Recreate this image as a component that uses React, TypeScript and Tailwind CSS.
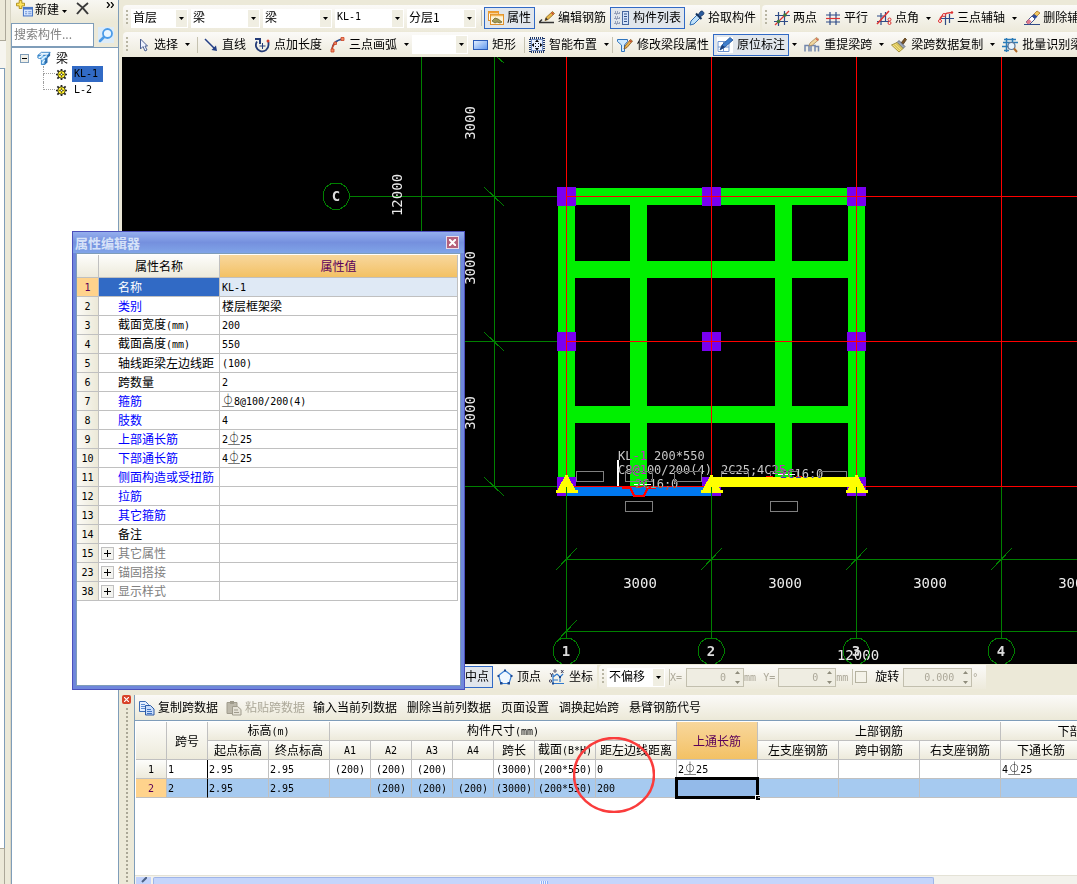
import type { ReactNode } from 'react';
import clsx from 'clsx';

const CJK = "font-['Noto_Sans_CJK_SC',sans-serif]";
const MONO = "font-['DejaVu_Sans_Mono','Noto_Sans_CJK_JP',monospace]";

// Latin runs are set in a half-width face, CJK runs in the full-width one
function Mixed({ text }: { text: string }) {
  const parts = text.split(/([\x20-\x7e]+)/).filter(Boolean);
  return (
    <>
      {parts.map((part, i) =>
        /^[\x20-\x7e]+$/.test(part) ? (
          <span key={i} className={clsx(MONO, 'text-[10px] whitespace-pre')}>
            {part}
          </span>
        ) : (
          <span key={i}>{part}</span>
        ),
      )}
    </>
  );
}

/* ---------- icons ---------- */

function Icon({ children, size = 'h-4 w-4' }: { children: ReactNode; size?: string }) {
  return (
    <svg viewBox="0 0 16 16" className={clsx('shrink-0', size)} fill="none" aria-hidden="true">
      {children}
    </svg>
  );
}

const NewIcon = () => (
  <Icon size="h-[17px] w-[17px]">
    <path d="M3 .5h2.500v2.500H8v2.500H5.500V8H3V5.500H.5V3H3z" fill="#ffe45c" stroke="#a8860b" strokeWidth=".8" />
    <rect x="7" y="7" width="8.500" height="8" fill="#dbe9ff" stroke="#4b78c8" />
    <path d="M7 8h8.500" stroke="#4b78c8" strokeWidth="2" />
    <path d="M8.500 11h2M11.500 11h3M8.500 13h2M11.500 13h3" stroke="#6c93d8" />
  </Icon>
);
const PropertyIcon = () => (
  <Icon>
    <rect x=".5" y="1.500" width="10" height="9" fill="#fff" stroke="#e0912c" />
    <path d="M0 2.500h11" stroke="#f0a030" strokeWidth="2" />
    <rect x="2.500" y="4.500" width="13" height="10" fill="#fdf3d8" stroke="#e0912c" />
    <path d="M3 5.500h12" stroke="#f5b95a" strokeWidth="1.500" />
    <path d="M4 11l3-3 3 1 4 3-2 1-3-1-2 1z" fill="#a09a58" stroke="#6b662c" strokeWidth=".8" />
  </Icon>
);
const EditRebarIcon = () => (
  <Icon>
    <path d="M0 12.500h15M0 12.500l3-3" stroke="#333" strokeWidth="1.500" />
    <path d="M6 10.500l1-3L13.500 1.500l2 2L9 9.500z" fill="#e8b94c" stroke="#8a6318" strokeWidth=".8" />
    <path d="M12.500 2.500l2 2" stroke="#c64634" strokeWidth="1.500" />
    <path d="M6 10.500l1-3 2 2z" fill="#333" />
  </Icon>
);
const ListIcon = () => (
  <Icon>
    <path d="M1 2h3v2H1zM1 7h3v2H1zM1 12h3v2H1z" stroke="#4a5c88" strokeDasharray="1 1" />
    <path d="M5 3h2M5 8h2M5 13h2" stroke="#4a5c88" strokeDasharray="1 1" />
    <rect x="8.500" y="1.500" width="6" height="13" fill="#d4e3fb" stroke="#47679f" />
    <path d="M10 4h3M10 6.500h3M10 9h3M10 11.500h3" stroke="#2f4e87" />
  </Icon>
);
const PickIcon = () => (
  <Icon>
    <path d="M1 15l1-4 6-6 3 3-6 6z" fill="#bfe1fa" stroke="#2f6db4" />
    <path d="M7 3.500l5.500 5.500" stroke="#16345f" strokeWidth="2" />
    <path d="M9 5l2.500-3.500c1.500-1.500 4.500 1 3 3L11 7z" fill="#2b5c9e" stroke="#16345f" strokeWidth=".8" />
  </Icon>
);
const TwoPointIcon = () => (
  <Icon>
    <path d="M4.500 2v14M10.500 1v14M1 5.500h15M0 11.500h14" stroke="#2f4b87" strokeWidth="1.200" />
    <path d="M1 15L15 1" stroke="#d33" strokeWidth="1.200" />
    <circle cx="4.500" cy="11.500" r="1.800" fill="#3c7a3c" />
    <circle cx="11" cy="5" r="1.800" fill="#3c7a3c" />
  </Icon>
);
const ParallelIcon = () => (
  <Icon>
    <path d="M5 2v13M11 2v13" stroke="#2f4b87" strokeWidth="1.200" />
    <path d="M1 5h14M1 12h14" stroke="#2f4b87" strokeWidth="1.200" />
    <path d="M1 8.500h14" stroke="#d33" strokeWidth="1.200" />
  </Icon>
);
const AngleIcon = () => (
  <Icon>
    <path d="M5 3v12M1 6h9M1 11.500h12M9.500 2v9" stroke="#2f4b87" strokeWidth="1.200" />
    <path d="M1 14L13 1" stroke="#d33" strokeWidth="1.500" />
    <circle cx="13.500" cy="9.500" r="1.500" stroke="#d33" />
    <circle cx="13.500" cy="13" r="1.500" stroke="#d33" />
  </Icon>
);
const ThreePointAxisIcon = () => (
  <Icon>
    <path d="M7.500 4v11M11.500 4v9M3 8.500h13" stroke="#2f4b87" strokeWidth="1.200" />
    <path d="M1.500 11.500C2 6 7 2.500 14 2.500" stroke="#d33" strokeWidth="1.500" />
    <circle cx="2" cy="11" r="1.500" fill="#fff" stroke="#d33" />
    <circle cx="6" cy="5" r="1.500" fill="#fff" stroke="#d33" />
    <circle cx="14" cy="2.500" r="1.200" fill="#d33" />
  </Icon>
);
const EraseIcon = () => (
  <Icon>
    <path d="M0 14.500h16" stroke="#2f4b87" />
    <path d="M8 6l5-5 3 2-6 6z" fill="#f3c860" stroke="#a8772a" strokeWidth=".8" />
    <path d="M7 7l3-3 3.500 2.500L10 10z" fill="#2f4b9a" />
    <path d="M4 10l4-4 3 3-5 5H4l-2-2z" fill="#fff" stroke="#44598f" />
    <path d="M2 12l3-3 2.500 2.500L5 14H3.500z" fill="#e1798b" />
  </Icon>
);
const CursorIcon = () => (
  <Icon>
    <path d="M5.500 2v10l2.500-2.500L10 14l2-1-2-4h2.500z" fill="#eef3ff" stroke="#4a5f92" />
  </Icon>
);
const LineIcon = () => (
  <Icon>
    <path d="M3 2l10 10" stroke="#233f86" strokeWidth="1.500" />
    <path d="M15 14L9.500 13 14 8.500z" fill="#233f86" />
  </Icon>
);
const PointLengthIcon = () => (
  <Icon>
    <path d="M3 4.500A6.300 6.300 0 1 0 14.500 8V5" stroke="#243c78" strokeWidth="1.800" />
    <path d="M1 2h5v5" stroke="#243c78" strokeWidth="2" />
    <path d="M8.500 6v6M5.500 9h6" stroke="#243c78" />
    <circle cx="14" cy="4" r="1.500" fill="#cf3a2a" />
  </Icon>
);
const ArcIcon = () => (
  <Icon>
    <path d="M2 14C2 7 6 3 13 2" stroke="#2a4c8e" strokeWidth="1.500" />
    <path d="M2 14C2 10 3 8 5 6" stroke="#cc4423" strokeWidth="1.500" />
    <path d="M1 12h3v3H1zM4 5h2.500v2.500H4zM11 .5h3v3h-3z" fill="#f08a68" stroke="#cc4423" strokeWidth=".8" />
  </Icon>
);
const RectIcon = () => (
  <Icon>
    <defs>
      <linearGradient id="rectFill" x1="0" y1="0" x2="1" y2="1">
        <stop offset="0" stopColor="#e8f2ff" />
        <stop offset="1" stopColor="#5d96ee" />
      </linearGradient>
    </defs>
    <rect x="1.500" y="3.500" width="14" height="9" fill="url(#rectFill)" stroke="#2c5cb8" />
  </Icon>
);
const SmartIcon = () => (
  <Icon>
    <rect x="1" y="1" width="14" height="14" stroke="#1c3568" strokeWidth="2" strokeDasharray="1 1" />
    <rect x="2.500" y="2.500" width="11" height="11" fill="#eaf1ff" stroke="#7590c4" />
    <path d="M8 2.500l2 2.500H6zM8 13.500l2-2.500H6zM2.500 8L5 6v4zM13.500 8L11 6v4z" fill="#000" />
    <path d="M6 6h1v1H6zM9 6h1v1H9zM6 9h1v1H6zM9 9h1v1H9z" fill="#000" />
  </Icon>
);
const EditBeamIcon = () => (
  <Icon>
    <path d="M.5 2.500h10v2L7.500 8v6.500h-3V8l-4-3.500z" fill="#cfeaff" stroke="#3075bd" />
    <path d="M7 12l1-3 5.500-6.500 2 1.500L10 10.500z" fill="#e9b550" stroke="#7d4c18" strokeWidth=".8" />
    <path d="M12.500 3.500l2 1.500" stroke="#c64634" strokeWidth="1.500" />
  </Icon>
);
const AnnotateIcon = () => (
  <Icon>
    <rect width="16" height="16" fill="#fff" />
    <path d="M1 4.500h11v10H1zM1 10h11M6.500 5v10" stroke="#6f95cf" />
    <path d="M3 13l2-5L13 .5 16 3 8 10z" fill="#3f7fce" stroke="#1f4f94" strokeWidth=".8" />
    <path d="M3 13l2-5 3 2z" fill="#1c3f78" />
  </Icon>
);
const RespanIcon = () => (
  <Icon>
    <path d="M1 14.500v-6h4v6M7 14.500v-6h4v6M11.500 9.500h3v5" stroke="#7286ac" strokeWidth="1.500" />
    <path d="M5 9l1-3L12.500.5l2.500 2L8.500 8z" fill="#f0d7a0" stroke="#a8895a" strokeWidth=".8" />
    <path d="M12 1.500l2 2" stroke="#db6650" strokeWidth="1.500" />
  </Icon>
);
const BrushIcon = () => (
  <Icon>
    <path d="M10 6l4-5 1.500 1.500L12 7.500z" fill="#7c5527" stroke="#4b3413" strokeWidth=".8" />
    <path d="M8 3.500l6 6-2 2-6-6z" fill="#9aa3b5" stroke="#4d566b" strokeWidth=".8" />
    <path d="M6 5.500l6 6-4 3.500-7.500-7z" fill="#f4e07a" stroke="#8f7d22" strokeWidth=".8" />
    <path d="M3 7.500l6 6M5 6.500l6 6" stroke="#b29c34" strokeWidth=".8" />
  </Icon>
);
const IdentifyIcon = () => (
  <Icon>
    <path d="M2 2.500h12M1 5.500h15M0 9.500h6M2 13.500h5M4.500 1v14M10.500 1v4" stroke="#2b7bb8" strokeWidth="1.500" />
    <circle cx="9.500" cy="9" r="3.500" fill="#e8f5ff" stroke="#5c7698" strokeWidth="1.200" />
    <path d="M12 11.500l3 3.500" stroke="#b06a26" strokeWidth="2" />
  </Icon>
);
const BeamFolderIcon = () => (
  <Icon size="h-[14px] w-[14px]">
    <path d="M1 5l4-3.500h10L12 5z" fill="#eaf6ff" stroke="#2a7cc4" />
    <path d="M1 5h11v3L9 9v6.500H5V9L1 8z" fill="#8ac6f2" stroke="#2a7cc4" />
    <path d="M12 5l3-3.500v4L12 8z" fill="#2b6fb0" />
    <path d="M9 9l3-2v6l-3 2.500z" fill="#2b6fb0" />
    <path d="M2 8l5-4M5 10l6-5M6 14l3-4" stroke="#f2faff" strokeWidth="1.200" />
  </Icon>
);
const GearIcon = () => (
  <Icon size="h-[11px] w-[11px]">
    <path d="M8 0v16M0 8h16M2 2l12 12M14 2L2 14" stroke="#222" strokeWidth="2.500" />
    <circle cx="8" cy="8" r="5.500" fill="#fff02c" stroke="#222" strokeWidth="1.200" />
    <path d="M8 4v8M4 8h8" stroke="#6a5e00" strokeWidth="1.200" />
    <circle cx="8" cy="8" r="1.500" fill="#fff" stroke="#333" />
  </Icon>
);
const SearchIcon = () => (
  <Icon>
    <circle cx="9.500" cy="6.500" r="4.500" fill="#eaf6ff" stroke="#4a9be8" strokeWidth="1.800" />
    <path d="M6 10l-4 4" stroke="#4a9be8" strokeWidth="2.500" strokeLinecap="round" />
  </Icon>
);
const VertexIcon = () => (
  <Icon>
    <path d="M8 1.500l6.500 5L12 14.500H4L1.500 6.500z" fill="#f1f8ff" stroke="#3b82d8" strokeWidth="1.200" />
    <path d="M7 .5h2v2H7zM.5 6h2v2h-2zM13.500 6h2v2h-2zM3 13h2.500v2.500H3zM10.500 13H13v2.500h-2.500z" fill="#1d4890" />
  </Icon>
);
const CoordIcon = () => (
  <Icon>
    <path d="M4 5v9.500h11M4 8l4-3M8 5l3 3 3-3M11 8v5M4 11h5" stroke="#2f78cc" strokeWidth="1.200" />
    <path d="M1 4l1.500 2L4 4M2.500 6v2M12 1l2.500 3M14.500 1L12 4" stroke="#224" strokeWidth=".8" />
    <circle cx="6" cy="2" r="1.200" stroke="#224" strokeWidth=".8" />
    <circle cx="1.500" cy="12" r="1.200" stroke="#224" strokeWidth=".8" />
    <path d="M3 13.500h2v2H3zM10 7h2v2h-2z" fill="#1d4890" />
  </Icon>
);
const CopyIcon = () => (
  <Icon>
    <path d="M.5 1.500h6l3 3v7h-9z" fill="#e4efff" stroke="#3d6cb5" />
    <path d="M2 4.500h4M2 6.500h5M2 8.500h4" stroke="#5c8bd2" />
    <path d="M6.500 5.500h5l3.500 3.500v6H6.500z" fill="#c7dcfb" stroke="#2c59a3" />
    <path d="M8 9.500h4M8 11.500h5M8 13.500h5" stroke="#3f72c2" />
  </Icon>
);
const PasteIcon = () => (
  <Icon>
    <path d="M1 2.500h10v11H1z" fill="#bdb9ab" stroke="#a09c8d" />
    <path d="M4 1h4v3H4z" fill="#9e9a8b" />
    <path d="M6.500 6.500h5l3.500 3v5.500H6.500z" fill="#e6e3d8" stroke="#a09c8d" />
    <path d="M8 10h4M8 12.500h5" stroke="#a09c8d" />
  </Icon>
);

/* ---------- toolbar parts ---------- */

function ToolButton({
  icon,
  label,
  active,
  tight,
  disabled,
}: {
  icon?: ReactNode;
  label: string;
  active?: boolean;
  tight?: boolean;
  disabled?: boolean;
}) {
  return (
    <button
      type="button"
      disabled={disabled}
      className={clsx(
        'flex h-[22px] shrink-0 items-center whitespace-nowrap border px-[3px]',
        tight ? 'gap-[3px]' : 'gap-1',
        active ? 'border-[#316ac5] bg-[#e1e6ec]' : 'border-transparent',
        disabled && 'text-[#aca899]',
      )}
    >
      {icon}
      <span className="pb-[2px]">{label}</span>
    </button>
  );
}

function Caret({ label }: { label: string }) {
  return (
    <button type="button" aria-label={label} className="flex h-[22px] w-[11px] shrink-0 items-center justify-center">
      <svg viewBox="0 0 5 3" className="h-[3px] w-[5px]" aria-hidden="true">
        <path d="M0 0h5L2.500 3z" />
      </svg>
    </button>
  );
}

const Divider = ({ className }: { className?: string }) => (
  <span className={clsx('h-4 w-px shrink-0 bg-[#c5c2b0]', className)} />
);

const Grip = () => (
  <span className="mx-[3px] h-4 w-[2px] shrink-0 bg-[repeating-linear-gradient(#b8b5a3_0_2px,transparent_2px_4px)]" />
);

function Combo({ label, value, width }: { label: string; value: string; width: string }) {
  return (
    <span className={clsx('relative flex h-[19px] shrink-0 bg-white', width)}>
      <select
        aria-label={label}
        className={clsx(
          'w-full appearance-none bg-transparent pb-[2px] pl-[2px] leading-4 outline-none',
          /^[\x20-\x7e]+$/.test(value) && `${MONO} text-[10px]`,
        )}
      >
        <option>{value}</option>
      </select>
      <span className="pointer-events-none absolute inset-y-px right-px flex w-[11px] items-center justify-center bg-[#f0eee2]">
        <svg viewBox="0 0 5 3" className="h-[3px] w-[5px]" aria-hidden="true">
          <path d="M0 0h5L2.500 3z" />
        </svg>
      </span>
    </span>
  );
}

const STRIP = 'flex shrink-0 items-center rounded-l-sm bg-linear-to-b from-[#fbfaf8] to-[#edeadb]';

function TopToolbars() {
  return (
    <div className="shrink-0 overflow-hidden pl-1">
      <div className="flex pt-[5px]">
        <div className={clsx(STRIP, 'h-[26px]')}>
          <Grip />
          <div className="flex gap-[3px]">
            <Combo label="楼层" value="首层" width="w-[57px]" />
            <Combo label="构件分类" value="梁" width="w-[69px]" />
            <Combo label="构件类型" value="梁" width="w-[69px]" />
            <Combo label="构件" value="KL-1" width="w-[69px]" />
            <Combo label="分层" value="分层1" width="w-[69px]" />
          </div>
          <Divider className="mr-[2px] ml-[5px]" />
          <ToolButton icon={<PropertyIcon />} label="属性" active tight />
          <ToolButton icon={<EditRebarIcon />} label="编辑钢筋" tight />
          <ToolButton icon={<ListIcon />} label="构件列表" active tight />
          <ToolButton icon={<PickIcon />} label="拾取构件" tight />
        </div>
        <div className={clsx(STRIP, 'ml-[2px] h-[26px] grow')}>
          <Grip />
          <ToolButton icon={<TwoPointIcon />} label="两点" tight />
          <ToolButton icon={<ParallelIcon />} label="平行" tight />
          <ToolButton icon={<AngleIcon />} label="点角" tight />
          <Caret label="点角选项" />
          <ToolButton icon={<ThreePointAxisIcon />} label="三点辅轴" tight />
          <Caret label="三点辅轴选项" />
          <ToolButton icon={<EraseIcon />} label="删除辅轴" tight />
        </div>
      </div>
      <div className={clsx(STRIP, 'mt-px h-[25px]')}>
        <Grip />
        <ToolButton icon={<CursorIcon />} label="选择" tight />
        <Caret label="选择选项" />
        <Divider className="ml-1" />
        <ToolButton icon={<LineIcon />} label="直线" />
        <ToolButton icon={<PointLengthIcon />} label="点加长度" />
        <ToolButton icon={<ArcIcon />} label="三点画弧" tight />
        <Caret label="三点画弧选项" />
        <Combo label="画弧方式" value="" width="w-[56px]" />
        <ToolButton icon={<RectIcon />} label="矩形" />
        <Divider className="ml-1" />
        <ToolButton icon={<SmartIcon />} label="智能布置" />
        <Caret label="智能布置选项" />
        <Divider />
        <ToolButton icon={<EditBeamIcon />} label="修改梁段属性" />
        <ToolButton icon={<AnnotateIcon />} label="原位标注" active />
        <Caret label="原位标注选项" />
        <ToolButton icon={<RespanIcon />} label="重提梁跨" />
        <Caret label="重提梁跨选项" />
        <ToolButton icon={<BrushIcon />} label="梁跨数据复制" />
        <Caret label="梁跨数据复制选项" />
        <ToolButton icon={<IdentifyIcon />} label="批量识别梁支座" />
      </div>
    </div>
  );
}

/* ---------- component tree ---------- */

function ComponentPanel() {
  return (
    <aside className="flex w-[108px] shrink-0 flex-col border-r border-[#7f9db9]">
      <div className="flex h-[22px] items-start bg-linear-to-b from-[#f8f7f2] to-[#ece9d8] pl-[5px]">
        <button type="button" className="flex items-center gap-[2px] whitespace-nowrap leading-4">
          <NewIcon />
          新建
        </button>
        <Caret label="新建选项" />
        <button type="button" aria-label="删除" className="ml-1 p-[2px]">
          <svg viewBox="0 0 13 13" className="h-[13px] w-[13px]" aria-hidden="true">
            <path d="M1 1c3 2 8 7 11 11M12 1C8 4 4 8 1 12" stroke="#3a3a3a" strokeWidth="2" fill="none" />
          </svg>
        </button>
        <button type="button" aria-label="更多" className="ml-auto px-1 py-[2px]">
          <svg viewBox="0 0 8 6" className="h-[6px] w-[8px]" aria-hidden="true">
            <path d="M1 0l2.500 3L1 6M5 0l2.500 3L5 6" stroke="#000" strokeWidth="1.200" fill="none" />
          </svg>
        </button>
      </div>
      <div className="flex h-[26px] items-center border-b border-[#7f9db9]">
        <input
          type="text"
          aria-label="搜索构件"
          placeholder="搜索构件..."
          className="h-6 w-[83px] border border-[#7f9db9] bg-white px-[2px] pb-[2px] leading-5 outline-none placeholder:text-[#808080]"
        />
        <button type="button" aria-label="搜索" className="mx-auto bg-[#dcebf8]">
          <SearchIcon />
        </button>
      </div>
      <div className="grow border-l border-[#7f9db9] bg-white pt-[2px] leading-4">
        <div className="flex items-center">
          <button
            type="button"
            aria-label="折叠"
            className="mr-2 ml-2 flex h-[9px] w-[9px] items-center justify-center border border-[#7f9db9] bg-[#f0efe8]"
          >
            <span className="h-px w-[5px] bg-black" />
          </button>
          <BeamFolderIcon />
          <span className="ml-[5px]">梁</span>
        </div>
        <ul className="ml-[31px]">
          {['KL-1', 'L-2'].map((name) => (
            <li key={name} className="flex h-4 items-center">
              <span className="mr-px h-4 w-3 shrink-0">
                <span className="block h-2 w-3 border-b border-l border-dotted border-[#a0a0a0]" />
                {name === 'KL-1' && <span className="block h-2 border-l border-dotted border-[#a0a0a0]" />}
              </span>
              <GearIcon />
              <button
                type="button"
                className={clsx(
                  MONO,
                  'ml-[5px] h-4 px-[2px] text-left text-[10px]',
                  name === 'KL-1' && 'w-[31px] bg-[#316ac5]',
                )}
              >
                {name}
              </button>
            </li>
          ))}
        </ul>
      </div>
    </aside>
  );
}

/* ---------- drawing ---------- */

const AXIS_X = [566, 711, 856, 1001];
const AXIS_Y = [196, 341, 486];

function AxisBubble({ x, y, name }: { x: number; y: number; name: string }) {
  return (
    <g>
      <path
        d="M-4-13h8l6 4 3 6v6l-3 6-6 4h-8l-6-4-3-6v-6l3-6z"
        transform={`translate(${x} ${y})`}
        fill="none"
        stroke="#008000"
      />
      <text x={x} y={y + 5} textAnchor="middle" fill="#dcdcdc" className="font-bold">
        {name}
      </text>
    </g>
  );
}

function Drawing() {
  return (
    <svg className="block h-full w-full bg-black" role="img" aria-label="梁平面图">
      {/* plan coordinates are window coordinates, shifted to the canvas origin */}
      <g transform="translate(-122 -57)" className={clsx(MONO, 'text-[14px]')} shapeRendering="crispEdges">
        <g stroke="#008000" fill="none">
          <path d="M421.500 57V664M494.500 57V486M349 196.500H566M349 341.500H566M349 486.500H566" />
          <path d="M566 559.500H1600M566 631.500H1600" />
          {AXIS_X.map((x) => (
            <path key={x} d={`M${x + 0.5} 486V638M${x - 10} 570l21-22`} />
          ))}
          <path d="M556 642l21-22M497 57l7 6" />
          {AXIS_Y.map((y) => (
            <path key={y} d={`M484 ${y - 9}l20 19`} />
          ))}
        </g>

        <g fill="#00f000">
          <path d="M558 188h307v17H558zM558 188h17v298h-17zM848 188h17v298h-17z" />
          <path d="M630 205h17v281h-17zM775 205h17v272h-17z" />
          <path d="M575 261h273v17H575zM575 406h273v17H575z" />
        </g>
        <g fill="#7a00f0">
          {AXIS_Y.map((y) =>
            AXIS_X.slice(0, 3).map((x) => <rect key={`${x}-${y}`} x={x - 9} y={y - 9} width="19" height="19" />),
          )}
        </g>
        <path d="M567 487h145v9H567z" fill="#0078f0" />
        <g stroke="#f00">
          {AXIS_X.map((x) => (
            <path key={x} d={`M${x + 0.5} 57V486`} />
          ))}
          {AXIS_Y.map((y) => (
            <path key={y} d={`M566 ${y + 0.5}H1600`} />
          ))}
        </g>

        <g fill="none" stroke="#808080">
          {[576, 625, 674, 721, 770, 819].map((x) => (
            <rect key={x} x={x + 0.5} y="471.500" width="27" height="10" />
          ))}
          <rect x="625.500" y="501.500" width="27" height="10" />
          <rect x="770.500" y="501.500" width="27" height="10" />
        </g>
        <path d="M711 477h146v10H711z" fill="#ff0" />
        {AXIS_X.slice(0, 3).map((x) => (
          <g key={x}>
            <path d={`M${x - 0.5} 475h2l8 15h2v3h-22v-3h2z`} fill="#ff0" />
            <path d={`M${x + 0.5} 487v9`} stroke="#008000" />
          </g>
        ))}
        <path d="M622 487.500h8l4 8h10l4-8h8" stroke="#f00" strokeWidth="2" fill="none" />
        <path d="M766 476.500h7M796 476.500h6" stroke="#f00" />
        <path d="M618 460v26" stroke="#fff" strokeWidth="2" />
        <path d="M634 484.500h17M778 474.500h17" stroke="#fff" />

        <g className="mix-blend-difference text-[12px]" fill="#c8c8c8">
          <text x="618" y="460">KL-1 200*550</text>
          <text x="618" y="474">C8@100/200(4)</text>
          <text x="721" y="474">2C25;4C25</text>
          <text x="635" y="488">2C16;0</text>
          <text x="780" y="478">2C16:0</text>
        </g>

        <g fill="#ececec" textAnchor="middle">
          {[640, 785, 930, 1075].map((x) => (
            <text key={x} x={x} y="588">3000</text>
          ))}
          <text x="858" y="660">12000</text>
          {[123, 268, 413].map((y) => (
            <text key={y} transform={`translate(475 ${y}) rotate(-90)`}>3000</text>
          ))}
          <text transform="translate(402 195) rotate(-90)">12000</text>
        </g>
        {AXIS_X.map((x, i) => (
          <AxisBubble key={x} x={x} y={651} name={String(i + 1)} />
        ))}
        <AxisBubble x={336} y={196} name="C" />
      </g>
    </svg>
  );
}

/* ---------- snap / offset bar ---------- */

function Spin({ id, value, width }: { id: string; value: string; width: string }) {
  return (
    <span className={clsx('flex h-[19px] shrink-0 border border-[#c2bfae] bg-[#efede2]', width)}>
      <input
        id={id}
        type="text"
        disabled
        defaultValue={value}
        className={clsx(MONO, 'w-full min-w-0 bg-transparent pr-[6px] text-right text-[10px] text-[#aca899]')}
      />
      <svg viewBox="0 0 11 17" className="h-[17px] w-[11px] shrink-0" aria-hidden="true">
        <path d="M3 5h5L5.500 2zM3 12h5l-2.500 3z" fill="#8f8c7c" />
      </svg>
    </span>
  );
}

function SnapBar() {
  const unit = clsx(MONO, 'text-[10px] text-[#aca899]');
  return (
    <div className="flex h-[26px] shrink-0 items-center overflow-hidden">
      <div className={clsx(STRIP, 'h-6 pl-[322px]')}>
        <ToolButton icon={<VertexIcon />} label="中点" active />
        <ToolButton icon={<VertexIcon />} label="顶点" />
        <ToolButton icon={<CoordIcon />} label="坐标" />
      </div>
      <div className={clsx(STRIP, 'ml-[2px] h-6 pr-2')}>
        <Grip />
        <Combo label="偏移方式" value="不偏移" width="w-[58px]" />
        <Divider className="ml-1" />
        <label htmlFor="offset-x" className={clsx(unit, 'mr-1')}>X=</label>
        <Spin id="offset-x" value="0" width="w-[58px]" />
        <span className={unit}>mm</span>
        <label htmlFor="offset-y" className={clsx(unit, 'mr-[3px] ml-[7px]')}>Y=</label>
        <Spin id="offset-y" value="0" width="w-[58px]" />
        <span className={unit}>mm</span>
        <Divider className="ml-1" />
        <label className="mr-[2px] flex items-center gap-2 px-[2px]">
          <input type="checkbox" className="h-3 w-3 appearance-none border border-[#b5b2a0] bg-[#f4f2e8]" />
          <span className="pb-[2px]">旋转</span>
        </label>
        <label htmlFor="angle" className="sr-only">旋转角度</label>
        <Spin id="angle" value="0.000" width="w-[69px]" />
        <span className={unit}>°</span>
      </div>
    </div>
  );
}

/* ---------- span data ---------- */

const SPAN_COLS = [
  'w-[31px]', 'w-[41px]', 'w-[61px]', 'w-[61px]', 'w-[41px]', 'w-[41px]', 'w-[41px]', 'w-[41px]',
  'w-[41px]', 'w-[61px]', 'w-[81px]', 'w-[81px]', 'w-[81px]', 'w-[81px]', 'w-[81px]', 'w-[81px]', 'w-[81px]',
];

const SPAN_ROWS = [
  ['1', '2.95', '2.95', '(200)', '(200)', '(200)', '', '(3000)', '(200*550)', '0', '2⏂25', '', '', '', '4⏂25', ''],
  ['2', '2.95', '2.95', '', '(200)', '(200)', '(200)', '(3000)', '(200*550)', '200', '', '', '', '', '', ''],
];

const SPAN_SUB_HEADERS = [
  '起点标高', '终点标高', 'A1', 'A2', 'A3', 'A4', '跨长', '截面(B*H)', '距左边线距离',
];

const TH = 'border-r border-b border-[#c0c0c0] bg-linear-to-b from-[#fdfdfb] to-[#edeadb] p-0 font-normal';

function SpanTable() {
  return (
    <table className="w-[1027px] table-fixed border-separate border-spacing-0 leading-[14px] whitespace-nowrap">
      <colgroup>
        {SPAN_COLS.map((w, i) => (
          <col key={i} className={w} />
        ))}
      </colgroup>
      <thead>
        <tr className="h-[19px]">
          <th rowSpan={2} className={TH} aria-label="行号" />
          <th rowSpan={2} className={TH}>跨号</th>
          <th colSpan={2} className={TH}><Mixed text="标高(m)" /></th>
          <th colSpan={7} className={TH}><Mixed text="构件尺寸(mm)" /></th>
          <th
            rowSpan={2}
            className="border-r border-b border-[#c0c0c0] bg-linear-to-b from-[#f8d79c] to-[#f3c163] p-0 font-normal text-[#5a005a]"
          >
            上通长筋
          </th>
          <th colSpan={3} className={TH}>上部钢筋</th>
          <th colSpan={2} className={TH}>下部钢筋</th>
        </tr>
        <tr className="h-[19px]">
          {SPAN_SUB_HEADERS.map((h) => (
            <th key={h} className={TH}><Mixed text={h} /></th>
          ))}
          {['左支座钢筋', '跨中钢筋', '右支座钢筋', '下通长筋', '下部钢筋'].map((h) => (
            <th key={h} className={TH}>{h}</th>
          ))}
        </tr>
      </thead>
      <tbody>
        {SPAN_ROWS.map((row, r) => (
          <tr key={r} className={clsx('h-[19px]', r === 1 && 'bg-[#a6caf0]')}>
            <th
              className={clsx(
                'border-r border-b border-[#c0c0c0] p-0 font-normal',
                r === 1 ? 'bg-[#ffd38c] text-[#5a005a]' : 'bg-linear-to-b from-[#fdfdfb] to-[#edeadb]',
              )}
            >
              <Mixed text={String(r + 1)} />
            </th>
            {row.map((cell, c) => (
              <td
                key={c}
                className={clsx(
                  'relative border-r border-b py-0 pr-0',
                  c === 0 ? 'border-r-black border-b-[#c0c0c0]' : 'border-[#c0c0c0]',
                  cell.startsWith('(') ? 'pl-0 text-center' : 'pl-px',
                )}
              >
                <Mixed text={cell} />
                {r === 1 && c === 10 && (
                  <span className="absolute -top-[2px] -right-[2px] -bottom-[2px] -left-[2px] border-[3px] border-black bg-[#93bae9]">
                    <span className="absolute -right-[4px] -bottom-[4px] h-[5px] w-[5px] border-t border-l border-white bg-black" />
                  </span>
                )}
              </td>
            ))}
          </tr>
        ))}
      </tbody>
    </table>
  );
}

function SpanPanel() {
  return (
    <section className="relative flex h-[194px] shrink-0 overflow-hidden pt-[5px]">
      <div className="flex w-4 shrink-0 flex-col items-center border-r border-[#7f9db9]">
        <button
          type="button"
          aria-label="关闭"
          className="mb-1 flex h-[9px] w-[9px] items-center justify-center rounded-[2px] bg-[#d8422a]"
        >
          <svg viewBox="0 0 5 5" className="h-[5px] w-[5px]" aria-hidden="true">
            <path d="M0 0l5 5M5 0L0 5" stroke="#fff" strokeWidth="1.200" />
          </svg>
        </button>
        <span className="w-[2px] grow bg-[repeating-linear-gradient(#aaa796_0_2px,transparent_2px_4px)]" />
      </div>
      <div className="flex min-w-0 grow flex-col">
        <div className="flex h-[26px] shrink-0 items-center gap-[2px] border-b border-[#7f9db9] bg-linear-to-b from-[#fbfaf8] to-[#ece9d8]">
          <div className="flex">
            <ToolButton icon={<CopyIcon />} label="复制跨数据" tight />
            <ToolButton icon={<PasteIcon />} label="粘贴跨数据" tight disabled />
            <ToolButton label="输入当前列数据" />
          </div>
          <ToolButton label="删除当前列数据" />
          <ToolButton label="页面设置" />
          <ToolButton label="调换起始跨" />
          <ToolButton label="悬臂钢筋代号" />
        </div>
        <div className="min-h-0 grow overflow-hidden bg-white pt-px pl-px">
          <SpanTable />
        </div>
        <div className="flex h-[9px] shrink-0 gap-[2px] border-t border-[#e4e2d6] bg-[#f3f2ec] pt-px pl-px">
          <span className="flex w-[15px] justify-center bg-[#c3d3fb]">
            <svg viewBox="0 0 6 6" className="h-[6px] w-[6px]" aria-hidden="true">
              <path d="M6 0L1 5" stroke="#4d6185" strokeWidth="2" />
            </svg>
          </span>
          <span className="flex w-[83%] justify-center rounded-t-xs border border-b-0 border-[#9fb5e8] bg-[#c5d5fb] pt-[3px]">
            <span className="w-2 bg-[repeating-linear-gradient(90deg,#eef4fe_0_1px,#8cb0f8_1px_2px)]" />
          </span>
        </div>
      </div>
      <svg viewBox="0 0 82 76" className="pointer-events-none absolute top-[47px] left-[454px] h-[76px] w-[82px]" aria-hidden="true">
        <ellipse cx="41" cy="38" rx="40" ry="37" fill="none" stroke="#fa3c3c" strokeWidth="2.500" />
      </svg>
    </section>
  );
}

/* ---------- property editor ---------- */

type Tone = 'text-white' | 'text-[#0000ff]' | 'text-black' | 'text-[#808080]';

const PROPS: { no: number; name: string; value: string; tone: Tone }[] = [
  { no: 1, name: '名称', value: 'KL-1', tone: 'text-white' },
  { no: 2, name: '类别', value: '楼层框架梁', tone: 'text-[#0000ff]' },
  { no: 3, name: '截面宽度(mm)', value: '200', tone: 'text-black' },
  { no: 4, name: '截面高度(mm)', value: '550', tone: 'text-black' },
  { no: 5, name: '轴线距梁左边线距', value: '(100)', tone: 'text-black' },
  { no: 6, name: '跨数量', value: '2', tone: 'text-black' },
  { no: 7, name: '箍筋', value: '⏂8@100/200(4)', tone: 'text-[#0000ff]' },
  { no: 8, name: '肢数', value: '4', tone: 'text-[#0000ff]' },
  { no: 9, name: '上部通长筋', value: '2⏂25', tone: 'text-[#0000ff]' },
  { no: 10, name: '下部通长筋', value: '4⏂25', tone: 'text-[#0000ff]' },
  { no: 11, name: '侧面构造或受扭筋', value: '', tone: 'text-[#0000ff]' },
  { no: 12, name: '拉筋', value: '', tone: 'text-[#0000ff]' },
  { no: 13, name: '其它箍筋', value: '', tone: 'text-[#0000ff]' },
  { no: 14, name: '备注', value: '', tone: 'text-black' },
  { no: 15, name: '其它属性', value: '', tone: 'text-[#808080]' },
  { no: 23, name: '锚固搭接', value: '', tone: 'text-[#808080]' },
  { no: 38, name: '显示样式', value: '', tone: 'text-[#808080]' },
];

function PropertyEditor() {
  return (
    <div
      role="dialog"
      aria-label="属性编辑器"
      className="absolute top-[231px] left-[72px] flex h-[459px] w-[393px] flex-col border border-[#4c50bb] bg-[#6f87dc] px-[3px] pb-[3px]"
    >
      <div className="-mx-[3px] flex h-[21px] shrink-0 items-center justify-between bg-linear-to-b from-[#94aeee] via-[#7590de] to-[#80a4e8] pr-[5px] pl-[2px]">
        <h2 className="text-[13px] leading-5 font-bold text-[#d6e2f8]">属性编辑器</h2>
        <button
          type="button"
          aria-label="关闭"
          className="flex h-[13px] w-[13px] items-center justify-center border border-[#e8dcea] bg-[#b5617c]"
        >
          <svg viewBox="0 0 7 7" className="h-[7px] w-[7px]" aria-hidden="true">
            <path d="M0 0l7 7M7 0L0 7" stroke="#fff" strokeWidth="2" />
          </svg>
        </button>
      </div>
      <div className="grow border border-[#7f9db9] bg-white pt-px pr-px">
        <table className="w-[381px] table-fixed border-separate border-spacing-0 leading-[14px] whitespace-nowrap">
          <colgroup>
            <col className="w-[22px]" />
            <col className="w-[121px]" />
            <col />
          </colgroup>
          <thead>
            <tr className="h-[23px]">
              <th className={TH} aria-label="序号" />
              <th className={TH}>属性名称</th>
              <th className="border-r border-b border-[#c0c0c0] bg-linear-to-b from-[#f8d79c] to-[#f3c163] p-0 font-normal text-[#5a005a]">
                属性值
              </th>
            </tr>
          </thead>
          <tbody>
            {PROPS.map(({ no, name, value, tone }) => (
              <tr key={no} className="h-[19px]">
                <th
                  className={clsx(
                    'border-r border-b border-[#c0c0c0] p-0 font-normal',
                    no === 1 ? 'bg-[#ffd38c] text-[#5a005a]' : 'bg-linear-to-r from-[#fbfaf6] to-[#ece9d8]',
                  )}
                >
                  <Mixed text={String(no)} />
                </th>
                <td className={clsx('border-r border-b border-[#c0c0c0] p-0', tone, no === 1 && 'bg-[#316ac5]')}>
                  <span className="flex items-center">
                    <span className="flex w-[19px] shrink-0 pl-[2px]">
                      {no > 14 && (
                        <button
                          type="button"
                          aria-label={`展开${name}`}
                          className="h-[13px] w-[13px] border border-[#c0c0c0] bg-[#f4f4f0]"
                        >
                          <svg viewBox="0 0 11 11" className="h-[11px] w-[11px]" aria-hidden="true">
                            <path d="M2 5.500h7M5.500 2v7" stroke="#000" />
                          </svg>
                        </button>
                      )}
                    </span>
                    <span>
                      <Mixed text={name} />
                    </span>
                  </span>
                </td>
                <td className={clsx('border-r border-b border-[#c0c0c0] py-0 pr-0 pl-[2px]', no === 1 && 'bg-[#dfe9f5]')}>
                  <Mixed text={value} />
                </td>
              </tr>
            ))}
          </tbody>
        </table>
      </div>
    </div>
  );
}

export default function App() {
  return (
    <div className={clsx(CJK, 'relative flex h-screen overflow-hidden bg-[#ece9d8] text-[12px] text-black')}>
      <div className="flex w-[11px] shrink-0 flex-col border-r border-[#d8d5c4]">
        <div className="h-[41px] w-[6px] border-r border-b border-[#aca899] bg-[#ece9d8]" />
        <div className="h-[27px] w-[6px] bg-[#f6f5ef]" />
        <div className="w-[5px] grow border-t border-r border-[#7f9db9] bg-white" />
        <div className="h-9 w-[5px] border-t border-r border-[#aca899] bg-[#ece9d8]" />
      </div>
      <ComponentPanel />
      <main className="flex min-w-0 grow flex-col">
        <TopToolbars />
        <div className="min-h-0 grow overflow-hidden pl-[3px]">
          <Drawing />
        </div>
        <SnapBar />
        <SpanPanel />
      </main>
      <PropertyEditor />
    </div>
  );
}
